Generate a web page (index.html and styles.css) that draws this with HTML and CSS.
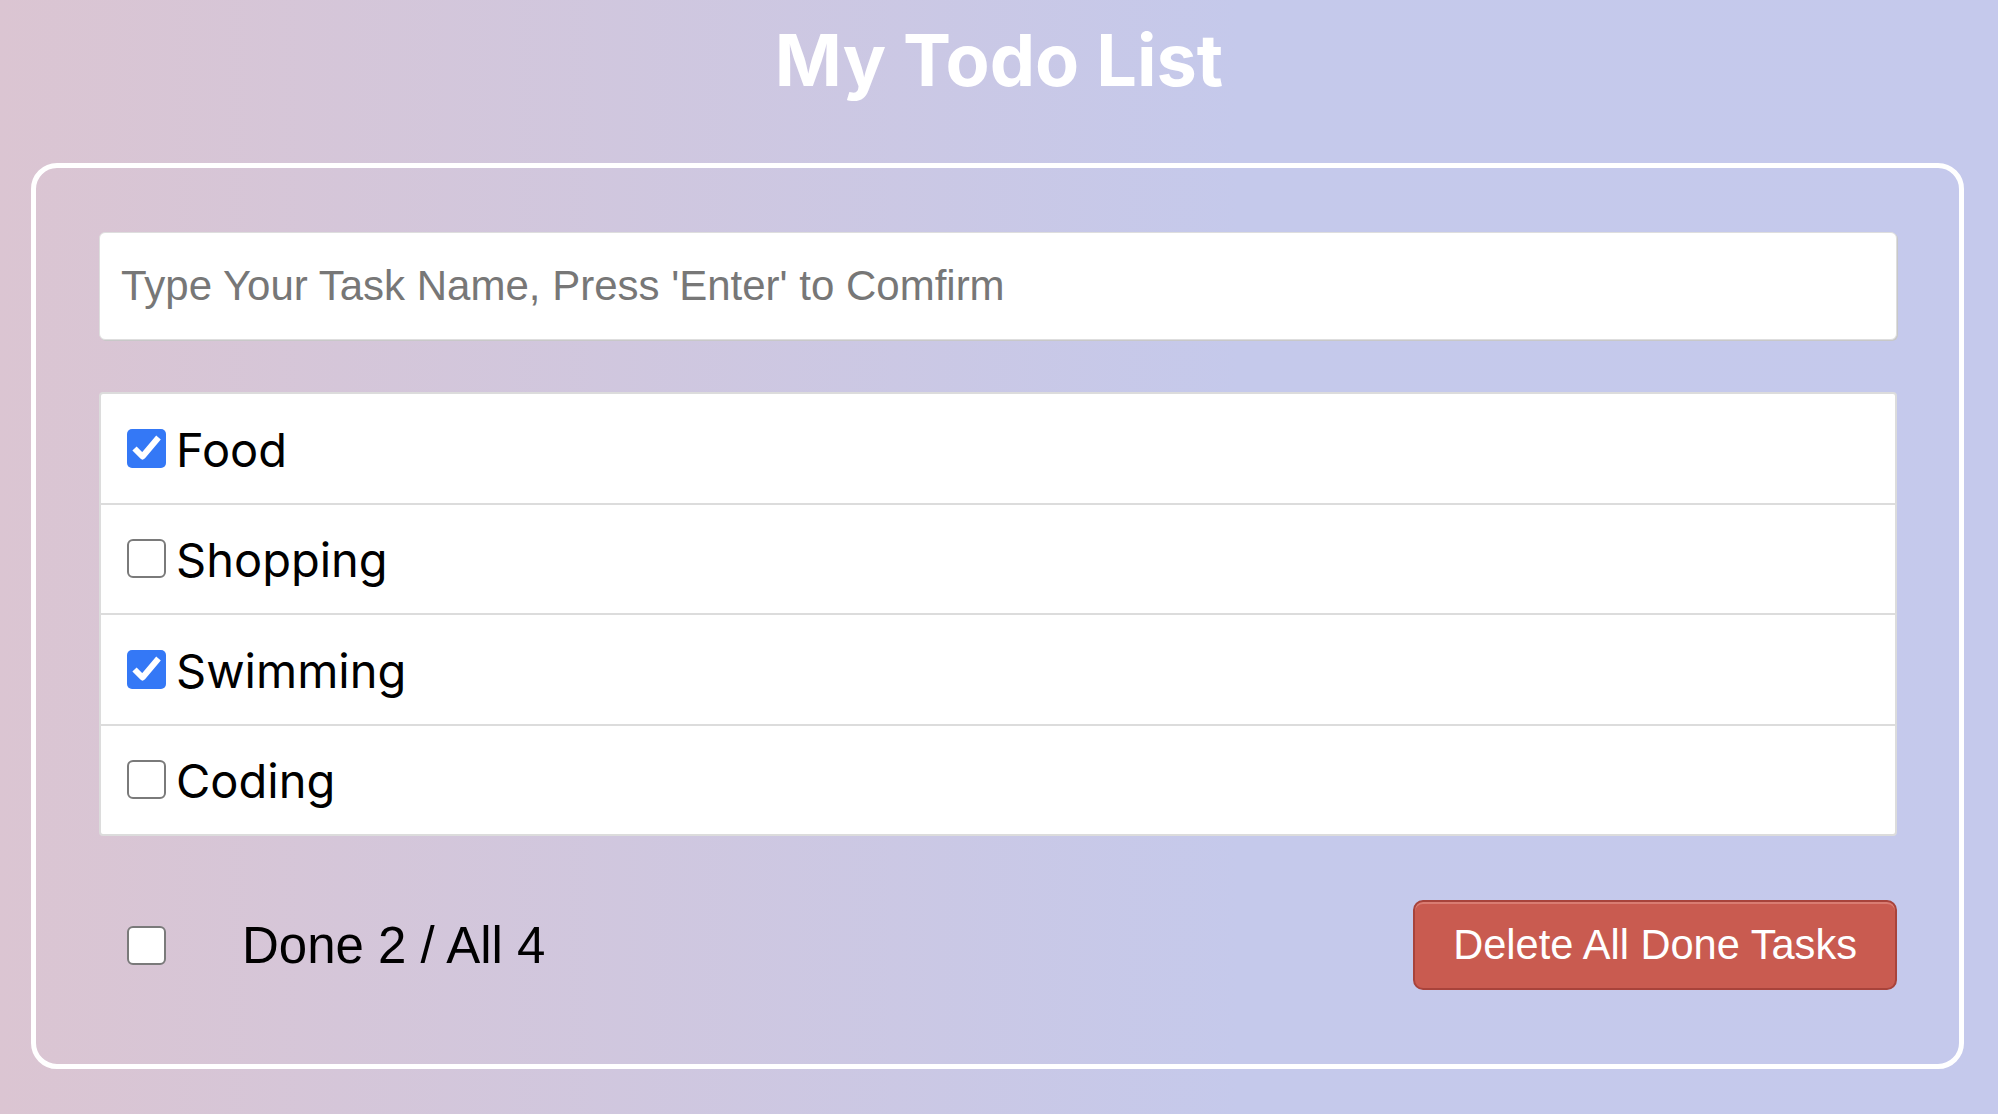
FILE: index.html
```html
<!DOCTYPE html>
<html lang="en">
<head>
<meta charset="utf-8">
<title>My Todo List</title>
<link rel="stylesheet" href="styles.css">
</head>
<body>
  <h1 class="title">My Todo List</h1>
  <div class="todo-card">
    <input class="task-input" type="text" placeholder="Type Your Task Name, Press 'Enter' to Comfirm">
    <ul class="task-list">
      <li class="task-item">
        <span class="check check-on"><svg viewBox="0 0 39 39" width="39" height="39"><polyline points="7.5,19.5 15.5,27.5 31.5,8.5" fill="none" stroke="#fff" stroke-width="6" stroke-linejoin="round"/></svg></span>
        <span class="task-name">Food</span>
      </li>
      <li class="task-item">
        <span class="check"></span>
        <span class="task-name">Shopping</span>
      </li>
      <li class="task-item">
        <span class="check check-on"><svg viewBox="0 0 39 39" width="39" height="39"><polyline points="7.5,19.5 15.5,27.5 31.5,8.5" fill="none" stroke="#fff" stroke-width="6" stroke-linejoin="round"/></svg></span>
        <span class="task-name">Swimming</span>
      </li>
      <li class="task-item">
        <span class="check"></span>
        <span class="task-name">Coding</span>
      </li>
    </ul>
    <div class="footer">
      <span class="check"></span>
      <span class="summary">Done 2 / All 4</span>
      <button class="delete-btn" type="button">Delete All Done Tasks</button>
    </div>
  </div>
</body>
</html>
```

FILE: styles.css
```css
* { box-sizing: border-box; }

html, body {
  margin: 0;
  padding: 0;
}

body {
  min-height: 100vh;
  background: linear-gradient(to right, #dbc5d2 0%, #c5c9eb 62%, #c5c9ec 100%);
  font-family: "Liberation Sans", Arial, sans-serif;
  overflow: hidden;
}

.title {
  margin: 0 0 67px;
  padding-top: 24px;
  font-family: Inter, "Noto Sans", sans-serif;
  font-weight: 700;
  font-size: 72px;
  line-height: 72px;
  letter-spacing: 0;
  color: #fff;
  text-align: center;
}

.todo-card {
  width: 1933px;
  margin: 0 0 0 31px;
  border: 5px solid #fff;
  border-radius: 26px;
  padding: 64px 62px 74px 63px;
  display: flex;
  flex-direction: column;
}

.task-input {
  display: block;
  width: 100%;
  height: 108px;
  margin: 0;
  padding: 0 21px;
  border: 1px solid #dedede;
  border-radius: 6px;
  box-shadow: 1px 1px 0 #c8c8c8;
  background: #fff;
  font-family: "Liberation Sans", Arial, sans-serif;
  font-size: 42px;
  color: #222;
  outline: none;
}

.task-input::placeholder {
  color: #777;
}

.task-list {
  list-style: none;
  margin: 52px 0 0;
  padding: 0;
  border: 2px solid #dcdcdc;
  border-radius: 4px;
  background: #fff;
}

.task-item {
  display: flex;
  align-items: center;
  gap: 10px;
  height: 110.5px;
  padding: 0 26px;
  border-bottom: 2px solid #dcdcdc;
}

.task-item:last-child {
  border-bottom: none;
  height: 108.5px;
}

.check {
  flex: none;
  width: 39px;
  height: 39px;
  border: 2px solid #7a7a7a;
  border-radius: 6px;
  background: #fff;
  display: flex;
}

.check svg {
  display: block;
}

.check-on {
  border: none;
  background: #3478f6;
  border-radius: 5px;
}

.task-name {
  font-family: Inter, "Noto Sans", sans-serif;
  font-size: 47px;
  line-height: 1;
  color: #000;
  padding-top: 2px;
}

.footer {
  display: flex;
  align-items: center;
  margin-top: 64px;
  padding-left: 28px;
  height: 90px;
}

.summary {
  margin-left: 76px;
  font-size: 51px;
  color: #000;
}

.delete-btn {
  margin-left: auto;
  height: 90px;
  padding: 0 38px;
  border: 2px solid #a8433b;
  border-radius: 10px;
  background: #c95b50;
  box-shadow: inset 0 2px 0 #d97c72;
  color: #fff;
  font-family: "Liberation Sans", Arial, sans-serif;
  font-size: 41.6px;
  cursor: pointer;
}
```
